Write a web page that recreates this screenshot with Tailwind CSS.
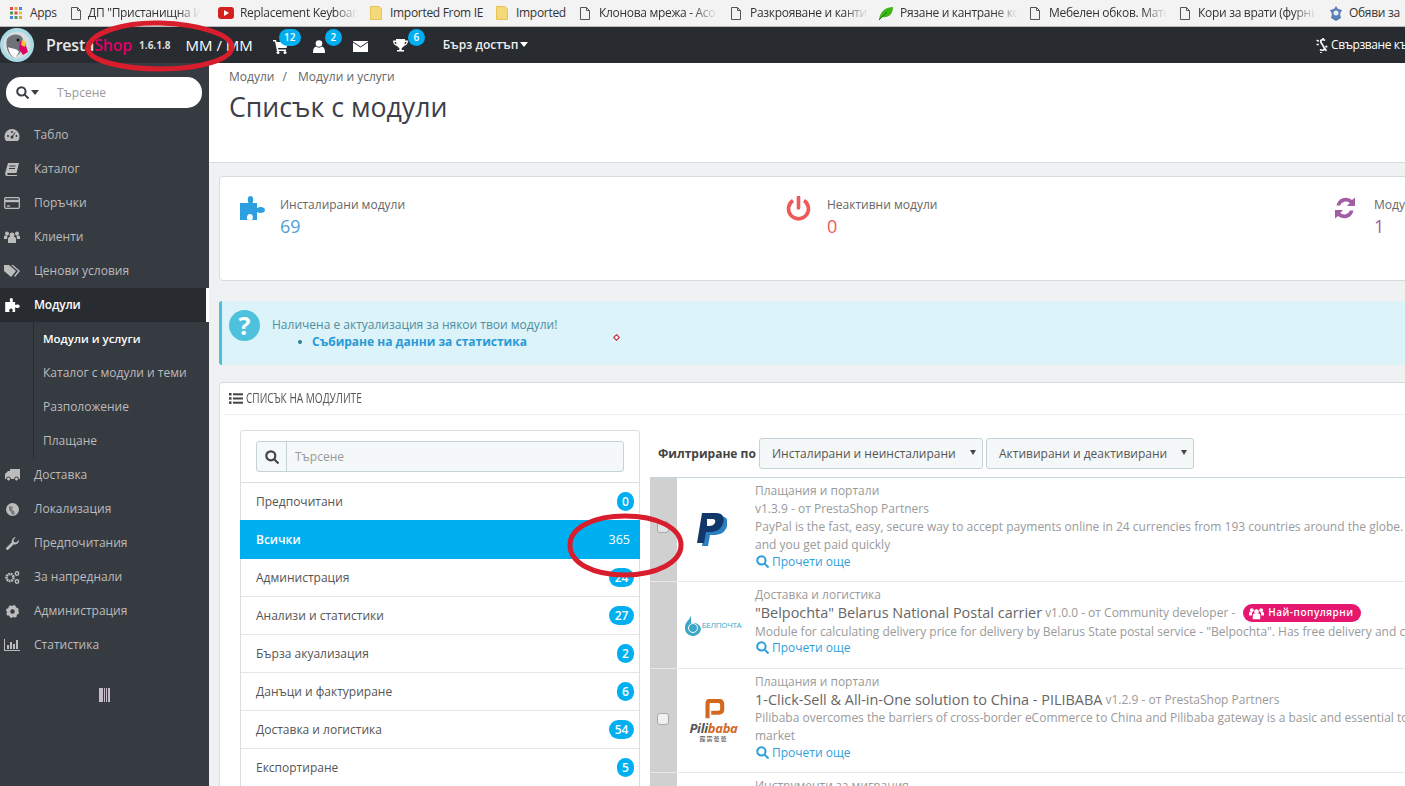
<!DOCTYPE html>
<html lang="bg">
<head>
<meta charset="utf-8">
<title>Списък с модули</title>
<script src="https://cdn.jsdelivr.net/npm/@tailwindcss/browser@4"></script>
</head>
<body class="m-0 font-['Open_Sans','Noto_Sans',sans-serif] text-[12px]">
<div class="relative w-[1405px] h-[786px] overflow-hidden bg-[#eff1f2] flex flex-col">

  <!-- bookmarks bar -->
  <div class="h-[27px] shrink-0 bg-[#f3f3f3] border-b border-[#b8b8b8] flex items-center pl-[10px] text-[12px] text-[#333] whitespace-nowrap overflow-hidden tracking-[-0.3px]">
    <div class="w-[61px] shrink-0 flex items-center gap-[8px]">
      <svg class="w-[12px] h-[12px]" viewBox="0 0 12 12"><rect x="0" y="0" width="3" height="3" fill="#e04a3f"/><rect x="4.5" y="0" width="3" height="3" fill="#e8a33d"/><rect x="9" y="0" width="3" height="3" fill="#3f8ae0"/><rect x="0" y="4.5" width="3" height="3" fill="#4a9e4f"/><rect x="4.5" y="4.5" width="3" height="3" fill="#e04a3f"/><rect x="9" y="4.5" width="3" height="3" fill="#e8c33d"/><rect x="0" y="9" width="3" height="3" fill="#3f8ae0"/><rect x="4.5" y="9" width="3" height="3" fill="#4a9e4f"/><rect x="9" y="9" width="3" height="3" fill="#e8a33d"/></svg>
      <span>Apps</span>
    </div>
    <div class="w-[147px] shrink-0 flex items-center gap-[7px]">
      <svg class="w-[10px] h-[13px] shrink-0" viewBox="0 0 10 13" fill="none" stroke="#555"><path d="M.5.5h6l3 3v9h-9zM6.500.5v3h3"/></svg>
      <span class="w-[112px] overflow-hidden [mask-image:linear-gradient(to_right,black_80%,transparent)]">ДП "Пристанищна Инфраструктура"</span>
    </div>
    <div class="w-[152px] shrink-0 flex items-center gap-[6px]">
      <svg class="w-[16px] h-[12px] shrink-0" viewBox="0 0 16 12"><rect width="16" height="12" rx="3" fill="#d5201f"/><path d="M6 3l5 3-5 3z" fill="#fff"/></svg>
      <span class="w-[118px] overflow-hidden [mask-image:linear-gradient(to_right,black_80%,transparent)]">Replacement Keyboard</span>
    </div>
    <div class="w-[126px] shrink-0 flex items-center gap-[8px]">
      <svg class="w-[12px] h-[14px] shrink-0" viewBox="0 0 12 14"><path d="M0 0h9l3 3v11H0z" fill="#f5d878"/><path d="M.5.500h8.300l2.700 2.700v10.300H.5z" fill="none" stroke="#e3c35a"/></svg>
      <span>Imported From IE</span>
    </div>
    <div class="w-[84px] shrink-0 flex items-center gap-[8px]">
      <svg class="w-[12px] h-[14px] shrink-0" viewBox="0 0 12 14"><path d="M0 0h9l3 3v11H0z" fill="#f5d878"/><path d="M.5.500h8.300l2.700 2.700v10.300H.5z" fill="none" stroke="#e3c35a"/></svg>
      <span>Imported</span>
    </div>
    <div class="w-[151px] shrink-0 flex items-center gap-[9px]">
      <svg class="w-[10px] h-[13px] shrink-0" viewBox="0 0 10 13" fill="none" stroke="#555"><path d="M.5.500h6l3 3v9h-9zM6.500.5v3h3"/></svg>
      <span class="w-[118px] overflow-hidden [mask-image:linear-gradient(to_right,black_80%,transparent)]">Клонова мрежа - Асоциация</span>
    </div>
    <div class="w-[147px] shrink-0 flex items-center gap-[9px]">
      <svg class="w-[10px] h-[13px] shrink-0" viewBox="0 0 10 13" fill="none" stroke="#555"><path d="M.5.500h6l3 3v9h-9zM6.500.5v3h3"/></svg>
      <span class="w-[118px] overflow-hidden [mask-image:linear-gradient(to_right,black_80%,transparent)]">Разкрояване и кантиране</span>
    </div>
    <div class="w-[152px] shrink-0 flex items-center gap-[6px]">
      <svg class="w-[16px] h-[15px] shrink-0" viewBox="0 0 16 15"><path d="M1 14C2 6 7 1 15 1c0 8-5 11-11 10z" fill="#3fb618"/><path d="M1 14L9 6" stroke="#1c6e0a"/></svg>
      <span class="w-[118px] overflow-hidden [mask-image:linear-gradient(to_right,black_80%,transparent)]">Рязане и кантране кс</span>
    </div>
    <div class="w-[150px] shrink-0 flex items-center gap-[9px]">
      <svg class="w-[10px] h-[13px] shrink-0" viewBox="0 0 10 13" fill="none" stroke="#555"><path d="M.5.500h6l3 3v9h-9zM6.500.5v3h3"/></svg>
      <span class="w-[118px] overflow-hidden [mask-image:linear-gradient(to_right,black_80%,transparent)]">Мебелен обков. Материали</span>
    </div>
    <div class="w-[149px] shrink-0 flex items-center gap-[8px]">
      <svg class="w-[10px] h-[13px] shrink-0" viewBox="0 0 10 13" fill="none" stroke="#555"><path d="M.5.500h6l3 3v9h-9zM6.500.5v3h3"/></svg>
      <span class="w-[118px] overflow-hidden [mask-image:linear-gradient(to_right,black_80%,transparent)]">Кори за врати (фурнир)</span>
    </div>
    <div class="shrink-0 flex items-center gap-[6px]">
      <svg class="w-[14px] h-[15px] shrink-0" viewBox="0 0 14 15"><path d="M7 0l2 3 4 1-2 4 1 4-5 3-5-3 1-4-2-4 4-1z" fill="#5a7fb5"/><circle cx="7" cy="7" r="2.500" fill="#e9eef5"/></svg>
      <span>Обяви за</span>
    </div>
  </div>

  <!-- top bar -->
  <div class="h-[36px] shrink-0 bg-[#282b30] flex items-center text-white whitespace-nowrap overflow-hidden">
    <svg class="w-[36px] h-[36px] shrink-0 -ml-[1px]" viewBox="0 0 36 36">
      <circle cx="18" cy="18" r="17" fill="#a9dbe6"/>
      <circle cx="18" cy="18" r="13.500" fill="#d8dde0"/>
      <path d="M8 12c3-5 11-6 15-2l2 6-4 10-6 5c-6-3-9-12-7-19z" fill="#6d7379"/>
      <path d="M9 20c4 2 9 1 11 5l-4 6c-4-2-6-6-7-11z" fill="#fdfdfd"/>
      <path d="M21 14l5 2 3 9-5 3-4-6z" fill="#df0067"/>
      <path d="M23 13l4 2-1 5-4-2z" fill="#f5c33b"/>
      <circle cx="19" cy="13" r="1.500" fill="#111"/>
    </svg>
    <span class="ml-[11px] text-[16px] font-semibold tracking-[-0.2px] text-[#e8e8e8]">Presta<span class="text-[#df0067]">Shop</span></span>
    <span class="ml-[7px] text-[10px] font-bold text-[#ddd]">1.6.1.8</span>
    <span class="ml-[15px] text-[15px] text-white">MM / MM</span>
    <div class="relative ml-[20px] w-[40px] h-[36px] shrink-0">
      <svg class="absolute left-0 top-[12px] w-[15px] h-[15px]" viewBox="0 0 15 15" fill="#fff"><path d="M0 1h3l.6 2H15l-1.500 6H5l.4 1.500H13V12H4L2 2.500H0z"/><circle cx="5" cy="13.500" r="1.500"/><circle cx="12" cy="13.500" r="1.500"/></svg>
      <span class="absolute left-[6px] top-[2px] w-[22px] h-[17px] rounded-full bg-[#00aff0] text-[10px] font-semibold flex items-center justify-center">12</span>
    </div>
    <div class="relative w-[40px] h-[36px] shrink-0">
      <svg class="absolute left-0 top-[13px] w-[12px] h-[13px]" viewBox="0 0 12 13" fill="#fff"><circle cx="6" cy="3.500" r="3.300"/><path d="M0 13c0-4 1-6 3-6.500 2 1.500 4 1.500 6 0 2 .5 3 2.500 3 6.500z"/></svg>
      <span class="absolute left-[12px] top-[2px] w-[17px] h-[17px] rounded-full bg-[#00aff0] text-[10px] font-semibold flex items-center justify-center">2</span>
    </div>
    <div class="w-[40px] h-[36px] shrink-0 flex items-center">
      <svg class="w-[15px] h-[11px] mt-[3px]" viewBox="0 0 15 11"><rect width="15" height="11" fill="#fff"/><path d="M0 1l7.500 5L15 1" fill="none" stroke="#282b30"/></svg>
    </div>
    <div class="relative w-[50px] h-[36px] shrink-0">
      <svg class="absolute left-0 top-[12px] w-[15px] h-[14px]" viewBox="0 0 15 14" fill="#fff"><path d="M3 0h9v1.500h3c0 3-1.500 5-4 5.500-.7 1-1.500 1.600-2.300 2V11H11v1.500H4V11h2.300V9C5.500 8.600 4.700 8 4 7 1.500 6.500 0 4.500 0 1.500h3zM1.500 3c.2 1.200.8 2 2 2.500L3 3zm12 0H12l-.5 2.500c1.200-.5 1.800-1.300 2-2.500z"/></svg>
      <span class="absolute left-[15px] top-[2px] w-[17px] h-[17px] rounded-full bg-[#00aff0] text-[10px] font-semibold flex items-center justify-center">6</span>
    </div>
    <span class="text-[12px] font-semibold text-[#eee]">Бърз достъп</span>
    <span class="ml-[2px] mt-[-2px] w-0 h-0 border-x-[4px] border-x-transparent border-t-[5px] border-t-white"></span>
    <div class="ml-auto flex items-center gap-[2px] w-[90px] shrink-0 overflow-hidden">
      <svg class="w-[14px] h-[15px] shrink-0" viewBox="0 0 12 14" fill="none" stroke="#fff" stroke-width="1.500"><path d="M9 2c-3-1-5 0-4 2l3 5c1 2-1 3-4 2M1 2l2 1M1 6h2M10 12l-1-2M11 8H9M7 1V0M5 13v1"/></svg>
      <span class="text-[12px] tracking-[-0.4px]">Свързване към</span>
    </div>
  </div>

  <div class="flex flex-1 min-h-0">
    <!-- sidebar -->
    <aside class="w-[209px] shrink-0 bg-[#363a41] text-[#bcbcbc] text-[12px]">
      <div class="h-[55px] pl-[6px] pt-[14px]">
        <div class="w-[196px] h-[31px] bg-white rounded-[15px] flex items-center pl-[10px] text-[#999]">
          <svg class="w-[13px] h-[13px] shrink-0" viewBox="0 0 14 14" fill="none" stroke="#3a3f46" stroke-width="2.200"><circle cx="5.800" cy="5.800" r="4.500"/><path d="M9 9l4.500 4.500"/></svg>
          <span class="ml-[2px] w-0 h-0 border-x-[4px] border-x-transparent border-t-[5px] border-t-[#3a3f46]"></span>
          <span class="ml-[18px]">Търсене</span>
        </div>
      </div>
      <nav class="flex flex-col">
        <a class="h-[34px] flex items-center"><span class="w-[34px] pl-[4px] shrink-0"><svg class="w-[16px] h-[14px]" viewBox="0 0 16 14" fill="#bcbcbc"><path d="M8 1a7.500 7.500 0 0 0-6.500 11.200l1 .8h11l1-.8A7.500 7.500 0 0 0 8 1z"/><circle cx="8" cy="9" r="1.500" fill="#363a41"/><path d="M8 9l3-4.500" stroke="#363a41"/><circle cx="4" cy="8" r="1" fill="#363a41"/><circle cx="8" cy="4" r="1" fill="#363a41"/><circle cx="12.500" cy="8" r="1" fill="#363a41"/></svg></span>Табло</a>
        <a class="h-[34px] flex items-center"><span class="w-[34px] pl-[5px] shrink-0"><svg class="w-[14px] h-[13px]" viewBox="0 0 14 13" fill="#bcbcbc"><path d="M3 0h11l-2.500 10H3c-1 0-1 2 0 2h9v1H2c-2 0-2-2-1.700-3.500z"/><path d="M4.500 3h6M4 5.500h6" stroke="#363a41"/></svg></span>Каталог</a>
        <a class="h-[34px] flex items-center"><span class="w-[34px] pl-[4px] shrink-0"><svg class="w-[16px] h-[12px]" viewBox="0 0 16 12" fill="none" stroke="#bcbcbc" stroke-width="1.300"><rect x=".7" y=".7" width="14.600" height="10.600" rx="1"/><path d="M1 4h14" stroke-width="2.400"/><path d="M3 9h3" /></svg></span>Поръчки</a>
        <a class="h-[34px] flex items-center"><span class="w-[34px] pl-[4px] shrink-0"><svg class="w-[16px] h-[12px]" viewBox="0 0 16 12" fill="#bcbcbc"><circle cx="8" cy="4" r="2.500"/><circle cx="3" cy="2.500" r="2"/><circle cx="13" cy="2.500" r="2"/><path d="M4 12V8c0-1.500 1-2 2-2h4c1 0 2 .5 2 2v4zM0 8V6c0-1 .7-1.500 1.500-1.500H3.500L3 8zM16 8V6c0-1-.7-1.500-1.500-1.500H12.500L13 8z"/></svg></span>Клиенти</a>
        <a class="h-[34px] flex items-center"><span class="w-[34px] pl-[4px] shrink-0"><svg class="w-[16px] h-[12px]" viewBox="0 0 16 12" fill="#bcbcbc"><path d="M0 0h5l7 6-5 6-7-6z"/><path d="M7 0h2l7 6-5 6-1-1 4-5z"/></svg></span>Ценови условия</a>
        <a class="relative h-[34px] flex items-center bg-[#282b30] text-white font-semibold tracking-[-0.2px]"><span class="w-[34px] pl-[5px] shrink-0"><svg class="w-[15px] h-[14px]" viewBox="0 0 25 24" fill="#fff"><path d="M5 7h3.500C7 3 8 0 10.500 0S14 3 12.500 7H17v5c3-2 8-1 8 2s-5 4-8 2v8h-5c2-3 .5-6-2-6s-4 3-2.500 6H0V7z"/></svg></span>Модули<span class="absolute right-0 top-0 w-[3px] h-full bg-white"></span></a>
        <div class="ml-[33px] border-l border-[#282b30] flex flex-col">
          <a class="h-[34px] flex items-center pl-[9px] text-white font-semibold text-[11.500px]">Модули и услуги</a>
          <a class="h-[34px] flex items-center pl-[9px] text-[12px]">Каталог с модули и теми</a>
          <a class="h-[34px] flex items-center pl-[9px] text-[12px]">Разположение</a>
          <a class="h-[34px] flex items-center pl-[9px] text-[12px]">Плащане</a>
        </div>
        <a class="h-[34px] flex items-center"><span class="w-[34px] pl-[5px] shrink-0"><svg class="w-[15px] h-[12px]" viewBox="0 0 15 12" fill="#bcbcbc"><path d="M5 0h10v10H0V5l3-3h2z"/><circle cx="3.500" cy="10" r="2" stroke="#363a41"/><circle cx="11.500" cy="10" r="2" stroke="#363a41"/></svg></span>Доставка</a>
        <a class="h-[34px] flex items-center"><span class="w-[34px] pl-[6px] shrink-0"><svg class="w-[13px] h-[13px]" viewBox="0 0 13 13"><circle cx="6.500" cy="6.500" r="6.500" fill="#bcbcbc"/><path d="M3 3l4 1-1 3 2 1 1 3-3 1-1-3-2-2z" fill="#363a41" opacity=".5"/></svg></span>Локализация</a>
        <a class="h-[34px] flex items-center"><span class="w-[34px] pl-[6px] shrink-0"><svg class="w-[13px] h-[13px]" viewBox="0 0 13 13" fill="#bcbcbc"><path d="M13 3.500a4 4 0 0 1-5.200 3.800L2.500 12.600a1.400 1.400 0 0 1-2-2l5.300-5.400A4 4 0 0 1 10 .3L7.500 2.800l.4 2.300 2.300.4L12.700 3z"/></svg></span>Предпочитания</a>
        <a class="h-[34px] flex items-center"><span class="w-[34px] pl-[5px] shrink-0"><svg class="w-[15px] h-[13px]" viewBox="0 0 15 13"><circle cx="5" cy="6.500" r="3.500" fill="none" stroke="#bcbcbc" stroke-width="2.600" stroke-dasharray="1.800 .6"/><circle cx="12" cy="2.500" r="1.700" fill="none" stroke="#bcbcbc" stroke-width="1.400"/><circle cx="12" cy="10.500" r="1.700" fill="none" stroke="#bcbcbc" stroke-width="1.400"/></svg></span>За напреднали</a>
        <a class="h-[34px] flex items-center"><span class="w-[34px] pl-[6px] shrink-0"><svg class="w-[13px] h-[13px]" viewBox="0 0 13 13"><circle cx="6.500" cy="6.500" r="4" fill="none" stroke="#bcbcbc" stroke-width="3.500"/><circle cx="6.500" cy="6.500" r="5.500" fill="none" stroke="#bcbcbc" stroke-width="2" stroke-dasharray="2.400 1.920"/></svg></span>Администрация</a>
        <a class="h-[34px] flex items-center"><span class="w-[34px] pl-[4px] shrink-0"><svg class="w-[16px] h-[12px]" viewBox="0 0 16 12" fill="#bcbcbc"><path d="M0 0h1v11h15v1H0z"/><path d="M3 6h2v4H3zM6 3h2v7H6zM9 5h2v5H9zM12 1h2v9h-2z"/></svg></span>Статистика</a>
      </nav>
      <div class="mt-[26px] ml-[99px] w-[11px] h-[14px] bg-[repeating-linear-gradient(to_right,#c4bcc8_0,#c4bcc8_1.600px,transparent_1.600px,transparent_2.300px)]"></div>
    </aside>

    <!-- main -->
    <main class="w-[1196px] shrink-0 overflow-hidden text-[#555]">
      <header class="h-[100px] bg-white border-b border-[#d9dcdf] pl-[20px]">
        <div class="pt-[5px] text-[12px] leading-[17px] text-[#666]">Модули<span class="mx-[8px]">/</span> Модули и услуги</div>
        <h1 class="mt-[4px] text-[26.700px] leading-[36px] font-normal text-[#3c4048]">Списък с модули</h1>
      </header>

      <!-- stats -->
      <section class="ml-[10px] mt-[13px] w-[1400px] h-[105px] bg-white rounded-[4px] border border-[#d8dbde] grid grid-cols-[546px_547px_306px] pt-[19px] pl-[20px]">
        <div class="flex">
          <svg class="w-[25px] h-[24px] shrink-0" viewBox="0 0 25 24" fill="#2b9fe0"><path d="M5 7h3.500C7 3 8 0 10.500 0S14 3 12.500 7H17v5c3-2 8-1 8 2s-5 4-8 2v8h-5c2-3 .5-6-2-6s-4 3-2.500 6H0V7z"/></svg>
          <div class="ml-[15px]"><div class="text-[12px] leading-[18px] text-[#666]">Инсталирани модули</div><div class="text-[18px] leading-[24px] text-[#4f9fd6]">69</div></div>
        </div>
        <div class="flex">
          <svg class="w-[25px] h-[25px] shrink-0" viewBox="0 0 25 25" fill="none" stroke="#ed5a5a" stroke-width="3.600"><path d="M7 4.500a10 10 0 1 0 11 0"/><path d="M12.500 1v11" stroke-linecap="round"/></svg>
          <div class="ml-[16px]"><div class="text-[12px] leading-[18px] text-[#666]">Неактивни модули</div><div class="text-[18px] leading-[24px] text-[#ed5a5a]">0</div></div>
        </div>
        <div class="flex">
          <svg class="w-[24px] h-[24px] shrink-0" viewBox="0 0 24 24" fill="#a25ea3"><path d="M3.500 9.500A9.500 9.500 0 0 1 19 4l3-2.500V10h-8l2.800-3A6.300 6.300 0 0 0 7 9.500z"/><path d="M20.500 14.500A9.500 9.500 0 0 1 5 20l-3 2.500V14h8l-2.800 3A6.300 6.300 0 0 0 17 14.500z"/></svg>
          <div class="ml-[17px]"><div class="text-[12px] leading-[18px] text-[#666]">Модули за актуализиране</div><div class="text-[18px] leading-[24px] text-[#a25ea3]">1</div></div>
        </div>
      </section>

      <!-- alert -->
      <section class="relative ml-[10px] mt-[20px] w-[1400px] h-[64px] bg-[#dcf3f9] border-l-[3px] border-[#4bbfdc] rounded-l-[3px] flex">
        <span class="ml-[7px] mt-[9px] w-[31px] h-[31px] shrink-0 rounded-full bg-[#4ec2dc] text-white text-[25px] font-bold leading-[31px] text-center">?</span>
        <div class="ml-[12px] mt-[15px] text-[12px] leading-[17px] text-[#4f8d9f]">
          <div>Наличена е актуализация за някои твои модули!</div>
          <div class="flex items-center pl-[26px]"><span class="w-[4px] h-[4px] rounded-full bg-[#2b7f9e] mr-[10px]"></span><b class="text-[#2a9ad6] font-bold">Събиране на данни за статистика</b></div>
        </div>
        <span class="absolute left-[392px] top-[34px] w-[5px] h-[5px] rotate-45 border border-[#c4122f] bg-white"></span>
      </section>

      <!-- panel -->
      <section class="ml-[10px] mt-[17px] w-[1400px] h-[500px] bg-white border border-[#d8dbde] rounded-t-[4px]">
        <div class="ml-[4px] h-[32px] border-b border-[#eeeeee] flex items-center pl-[5px] text-[#555]">
          <svg class="w-[14px] h-[11px] shrink-0" viewBox="0 0 14 11" fill="#444"><rect y="0" width="2.500" height="2.500"/><rect y="4.200" width="2.500" height="2.500"/><rect y="8.400" width="2.500" height="2.500"/><rect x="4" y=".3" width="10" height="2"/><rect x="4" y="4.500" width="10" height="2"/><rect x="4" y="8.700" width="10" height="2"/></svg>
          <span class="ml-[3px] -mt-[2px] inline-block origin-left scale-x-[.72] text-[14px] font-normal whitespace-nowrap">СПИСЪК НА МОДУЛИТЕ</span>
        </div>
        <div class="flex pl-[20px] pt-[15px]">
          <!-- categories -->
          <div class="w-[400px] shrink-0 border border-[#dcdfe2] rounded-t-[3px] text-[12px] text-[#555]">
            <div class="h-[52px] px-[15px] pt-[10px] border-b border-[#dcdfe2]">
              <div class="h-[31px] flex border border-[#c5d2d6] rounded-[3px] bg-[#f5f8f9]">
                <span class="w-[30px] shrink-0 border-r border-[#c5d2d6] flex items-center justify-center"><svg class="w-[14px] h-[14px]" viewBox="0 0 14 14" fill="none" stroke="#444" stroke-width="2.200"><circle cx="5.800" cy="5.800" r="4.500"/><path d="M9 9l4.500 4.500"/></svg></span>
                <span class="pl-[8px] leading-[29px] text-[#999]">Търсене</span>
              </div>
            </div>
            <div class="h-[37px] flex items-center justify-between pl-[15px] pr-[5px]">Предпочитани<span class="w-[17px] h-[19px] rounded-full bg-[#00aff0] text-white font-semibold flex items-center justify-center">0</span></div>
            <div class="-mx-px h-[39px] flex items-center justify-between pl-[16px] pr-[10px] bg-[#00aff0] text-white"><span class="font-semibold">Всички</span><span class="mt-[2px] text-[12.500px]">365</span></div>
            <div class="h-[38px] flex items-center justify-between pl-[15px] pr-[5px] border-b border-[#e4e6e8]">Администрация<span class="w-[25px] h-[19px] rounded-full bg-[#00aff0] text-white font-semibold flex items-center justify-center">24</span></div>
            <div class="h-[38px] flex items-center justify-between pl-[15px] pr-[5px] border-b border-[#e4e6e8]">Анализи и статистики<span class="w-[25px] h-[19px] rounded-full bg-[#00aff0] text-white font-semibold flex items-center justify-center">27</span></div>
            <div class="h-[38px] flex items-center justify-between pl-[15px] pr-[5px] border-b border-[#e4e6e8]">Бърза акуализация<span class="w-[17px] h-[19px] rounded-full bg-[#00aff0] text-white font-semibold flex items-center justify-center">2</span></div>
            <div class="h-[38px] flex items-center justify-between pl-[15px] pr-[5px] border-b border-[#e4e6e8]">Данъци и фактуриране<span class="w-[17px] h-[19px] rounded-full bg-[#00aff0] text-white font-semibold flex items-center justify-center">6</span></div>
            <div class="h-[38px] flex items-center justify-between pl-[15px] pr-[5px] border-b border-[#e4e6e8]">Доставка и логистика<span class="w-[25px] h-[19px] rounded-full bg-[#00aff0] text-white font-semibold flex items-center justify-center">54</span></div>
            <div class="h-[38px] flex items-center justify-between pl-[15px] pr-[5px] border-b border-[#e4e6e8]">Експортиране<span class="w-[17px] h-[19px] rounded-full bg-[#00aff0] text-white font-semibold flex items-center justify-center">5</span></div>
          </div>

          <!-- modules -->
          <div class="ml-[10px] w-[960px] shrink-0">
            <div class="h-[47px] flex items-start pl-[8px] pt-[8px] whitespace-nowrap">
              <b class="mt-[7px] w-[101px] shrink-0 text-[12px] text-[#444] font-bold">Филтриране по</b>
              <div class="w-[224px] h-[31px] shrink-0 border border-[#c5d2d6] rounded-[3px] bg-[#f5f8f9] flex items-center justify-between pl-[12px] pr-[6px] text-[12px] text-[#555]">Инсталирани и неинсталирани<span class="mt-[-3px] w-0 h-0 border-x-[3px] border-x-transparent border-t-[5px] border-t-[#444]"></span></div>
              <div class="ml-[3px] w-[208px] h-[31px] shrink-0 border border-[#c5d2d6] rounded-[3px] bg-[#f5f8f9] flex items-center justify-between pl-[12px] pr-[6px] text-[12px] text-[#555]">Активирани и деактивирани<span class="mt-[-3px] w-0 h-0 border-x-[3px] border-x-transparent border-t-[5px] border-t-[#444]"></span></div>
            </div>
            <div class="border-t border-[#c5d6dc] whitespace-nowrap text-[12px] leading-[17.500px] text-[#9a9a9a]">
              <!-- row 1 -->
              <div class="h-[104px] flex border-b border-[#e8e8e8]">
                <div class="w-[27px] shrink-0 bg-[#d0d0d0] flex items-center justify-center pr-[2px] pb-[5px]"><span class="block w-[12px] h-[12px] rounded-[3px] border border-[#aaa] bg-[#e4e4e4]"></span></div>
                <div class="w-[78px] shrink-0 flex items-center justify-center pr-[12px]"><svg class="w-[33px] h-[34px]" viewBox="0 0 33 34"><path d="M10 0h14c7 0 9 5 7 10-2 7-7 9-14 9h-3l-2 11H6z" fill="#2a7fc1" transform="translate(2 3)"/><path d="M8 0h14c7 0 9 5 7 10-2 7-7 9-14 9h-3l-2 11H3z" fill="#12386b"/><path d="M13 6h6c3 0 3 4 0 6-1 .8-3 1-6 1z" fill="#fff"/></svg></div>
                <div class="pt-[4px]">
                  <div>Плащания и портали</div>
                  <div>v1.3.9 - от PrestaShop Partners</div>
                  <div class="mt-[1px]">PayPal is the fast, easy, secure way to accept payments online in 24 currencies from 193 countries around the globe. Accept</div>
                  <div>and you get paid quickly</div>
                  <div class="flex items-center text-[#2f9fdc]"><svg class="ml-[1px] mr-[3px] w-[13px] h-[13px]" viewBox="0 0 14 14" fill="none" stroke="#2f9fdc" stroke-width="2.200"><circle cx="5.800" cy="5.800" r="4.500"/><path d="M9 9l4.500 4.500"/></svg>Прочети още</div>
                </div>
              </div>
              <!-- row 2 -->
              <div class="h-[87px] flex border-b border-[#e8e8e8]">
                <div class="w-[27px] shrink-0 bg-[#d0d0d0]"></div>
                <div class="w-[78px] shrink-0 flex items-center justify-center pr-[6px]">
                  <svg class="w-[17px] h-[21px] shrink-0" viewBox="0 0 17 21"><path d="M6 0c-1 5-6 7-6 12a8 8 0 0 0 16 2A8 8 0 0 0 6 8z" fill="#3aa7c9"/><circle cx="8" cy="13" r="4.500" fill="none" stroke="#fff"/></svg>
                  <span class="text-[8px] text-[#3aa7c9] tracking-[-0.3px]">БЕЛПОЧТА</span>
                </div>
                <div class="pt-[4px]">
                  <div>Доставка и логистика</div>
                  <div class="flex items-center h-[19px]"><span class="text-[14.450px] text-[#666]">"Belpochta" Belarus National Postal carrier</span><span class="ml-[3px]">v1.0.0 - от Community developer -</span>
                    <span class="ml-[8px] h-[18px] w-[118px] rounded-[9px] bg-[#e6176e] text-white text-[10px] font-semibold tracking-[0.5px] flex items-center pl-[6px]"><svg class="mr-[4px] w-[15px] h-[13px]" viewBox="0 0 16 12" fill="#fff"><circle cx="8" cy="4" r="2.500"/><circle cx="3" cy="2.500" r="2"/><circle cx="13" cy="2.500" r="2"/><path d="M4 12V8c0-1.500 1-2 2-2h4c1 0 2 .5 2 2v4zM0 8V6c0-1 .7-1.500 1.500-1.500H3.500L3 8zM16 8V6c0-1-.7-1.500-1.500-1.500H12.500L13 8z"/></svg>Най-популярни</span>
                  </div>
                  <div>Module for calculating delivery price for delivery by Belarus State postal service - "Belpochta". Has free delivery and cash on</div>
                  <div class="-mt-[1px] flex items-center text-[#2f9fdc]"><svg class="ml-[1px] mr-[3px] w-[13px] h-[13px]" viewBox="0 0 14 14" fill="none" stroke="#2f9fdc" stroke-width="2.200"><circle cx="5.800" cy="5.800" r="4.500"/><path d="M9 9l4.500 4.500"/></svg>Прочети още</div>
                </div>
              </div>
              <!-- row 3 -->
              <div class="h-[104px] flex border-b border-[#e8e8e8]">
                <div class="w-[27px] shrink-0 bg-[#d0d0d0] flex items-center justify-center pr-[2px] pb-[4px]"><span class="block w-[12px] h-[12px] rounded-[3px] border border-[#aaa] bg-[#f0f0f0]"></span></div>
                <div class="w-[78px] shrink-0 flex flex-col items-center justify-center pr-[5px]">
                  <svg class="w-[23px] h-[22px]" viewBox="0 0 23 24" fill="none" stroke="#d2691e" stroke-width="4.500"><path d="M5 21V5q0-3 3-3h9q4 0 4 4v5q0 4-4 4H9"/></svg>
                  <span class="mt-[1px] text-[13px] leading-[13px] font-bold italic text-[#555] tracking-[-0.3px]">Pili<span class="text-[#d2691e]">baba</span></span>
                  <span class="text-[6px] leading-[8px] text-[#777] font-['Noto_Sans_CJK_SC',sans-serif] font-bold tracking-[1px]">霹雳爸爸</span>
                </div>
                <div class="pt-[4px]">
                  <div>Плащания и портали</div>
                  <div class="flex items-center h-[19px]"><span class="text-[14.450px] text-[#666]">1-Click-Sell &amp; All-in-One solution to China - PILIBABA</span><span class="ml-[3px]">v1.2.9 - от PrestaShop Partners</span></div>
                  <div class="-mt-[1px]">Pilibaba overcomes the barriers of cross-border eCommerce to China and Pilibaba gateway is a basic and essential tool for</div>
                  <div class="mt-[1px]">market</div>
                  <div class="-mt-[1px] flex items-center text-[#2f9fdc]"><svg class="ml-[1px] mr-[3px] w-[13px] h-[13px]" viewBox="0 0 14 14" fill="none" stroke="#2f9fdc" stroke-width="2.200"><circle cx="5.800" cy="5.800" r="4.500"/><path d="M9 9l4.500 4.500"/></svg>Прочети още</div>
                </div>
              </div>
              <!-- row 4 -->
              <div class="h-[60px] flex">
                <div class="w-[27px] shrink-0 bg-[#d0d0d0]"></div>
                <div class="w-[78px] shrink-0"></div>
                <div class="pt-[4px]">Инструменти за миграция</div>
              </div>
            </div>
          </div>
        </div>
      </section>
    </main>
  </div>

  <!-- hand-drawn red ellipses on the screenshot -->
  <svg class="absolute left-0 top-0 w-[1405px] h-[786px] pointer-events-none" viewBox="0 0 1405 786" fill="none" stroke="#d81e2c" stroke-width="5">
    <path d="M88 47C92 32 125 22 160 23c40 1 72 12 72 24 0 13-34 22-72 22-36 0-74-8-72-22z"/>
    <path d="M570 545c0-18 25-29 55-29 32 0 56 12 56 29 0 18-26 30-56 30-32 0-55-12-55-30z"/>
  </svg>
</div>
</body>
</html>
